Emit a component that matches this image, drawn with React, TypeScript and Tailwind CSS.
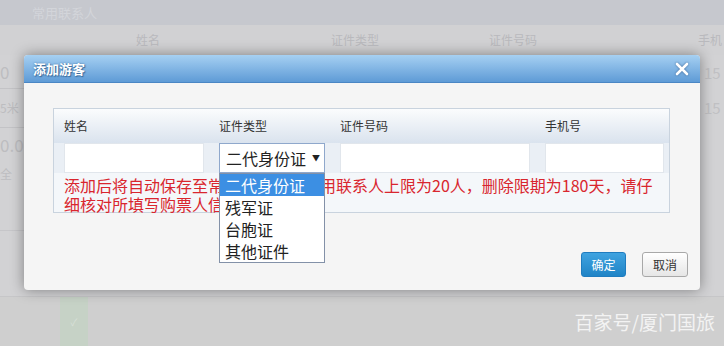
import React from "react";

const font = { fontFamily: '"Noto Sans CJK SC", "Noto Sans", sans-serif' };

export default function App() {
  return (
    <div className="relative w-[724px] h-[346px] overflow-hidden bg-[#d2d2d4]" style={font}>
      {/* background page */}
      <div className="flex flex-col w-full h-full">
        <div className="h-[25px] bg-[#c6c8ce] flex items-center pl-[32px] text-[13px] text-[#d3d5da] leading-none">
          常用联系人
        </div>
        <div className="h-[30px] bg-[#d1d1d3] flex items-center text-[12px] text-[#b9b9bd] leading-none">
          <span className="ml-[136px]">姓名</span>
          <span className="ml-[171px]">证件类型</span>
          <span className="ml-[110px]">证件号码</span>
          <span className="ml-[161px]">手机</span>
        </div>
        <div className="flex-1 flex">
          <div className="w-[24px] flex flex-col text-[#bdbdc0] leading-none">
            <div className="h-[33px] flex items-center text-[17px]">0</div>
            <div className="h-[39px] border-t border-[#c3c3c6] flex items-center text-[12px]">5米</div>
            <div className="h-[33px] border-t border-[#c3c3c6] flex items-center text-[17px]">0.0</div>
            <div className="h-[70px] flex items-start pt-[8px] text-[12px]">全</div>
            <div className="h-[60px] border-t border-[#c6c6c9]"></div>
          </div>
          <div className="flex-1"></div>
          <div className="w-[24px] flex flex-col text-[#c0c0c3] text-[15px] leading-none">
            <div className="h-[35px] flex items-center pl-[4px]">15</div>
            <div className="h-[35px] flex items-center pl-[4px]">15</div>
          </div>
        </div>
        <div className="h-[50px] border-t border-[#c6c6c8] bg-[#cfcfcf] flex items-stretch">
          <div className="w-[60px]"></div>
          <div className="w-[28px] bg-[#c6d2c6] flex items-center justify-center text-[10px] text-[#d8e0d8]">
            ✓
          </div>
          <div className="flex-1 flex items-center justify-end pr-[9px] text-[19px] text-[#f3f3f3] leading-none">
            百家号/厦门国旅
          </div>
        </div>
      </div>

      {/* dialog */}
      <div className="absolute left-[24px] top-[55px] w-[676px] h-[235px] rounded-[4px] bg-[#f5f5f5] shadow-[0_0_14px_rgba(0,0,0,0.4)] flex flex-col overflow-hidden">
        <div className="h-[28px] shrink-0 bg-gradient-to-b from-[#a6d0f2] to-[#5e9bd6] border-b border-[#4a86c4] flex items-center justify-between pl-[9px] pr-[11px]">
          <span className="text-[13px] font-bold text-white leading-none [text-shadow:0_0_2px_#3b6d9e,1px_1px_1px_#3b6d9e]">
            添加游客
          </span>
          <svg width="14" height="14" viewBox="0 0 14 14" className="drop-shadow-[0_0_1px_rgba(40,80,130,0.8)]">
            <path d="M2 2 L12 12 M12 2 L2 12" stroke="#ffffff" strokeWidth="2.6" strokeLinecap="round" />
          </svg>
        </div>

        <div className="flex-1 flex flex-col pt-[25px] pl-[29px] pr-[30px]">
          <div className="h-[105px] border border-[#c9d3de] bg-[#f4f7fa] flex flex-col">
            <div className="h-[34px] shrink-0 bg-gradient-to-b from-[#fbfcfd] to-[#dae3ee] flex items-center pl-[10px] gap-[15px] text-[12px] text-[#333] leading-none">
              <div className="w-[140px] shrink-0">姓名</div>
              <div className="w-[106px] shrink-0">证件类型</div>
              <div className="w-[190px] shrink-0">证件号码</div>
              <div className="w-[119px] shrink-0">手机号</div>
            </div>
            <div className="h-[30px] shrink-0 flex pl-[10px] gap-[15px] bg-[#eaeff5]">
              <div className="w-[140px] shrink-0 bg-white border border-[#e1e6ec]"></div>
              <div className="relative w-[106px] shrink-0">
                <div className="h-[30px] bg-white border border-[#8fa8cc] flex items-center pl-[6px] text-[16px] text-[#222] leading-none">
                  二代身份证
                  <span className="ml-[6px] text-[8px]">▼</span>
                </div>
                <div className="absolute z-10 left-0 top-[30px] w-[106px] bg-white border border-[#8391a8] flex flex-col text-[16px] leading-none text-[#222]">
                  <div className="h-[22px] bg-[#3c8fe3] text-white flex items-center pl-[5px]">二代身份证</div>
                  <div className="h-[22px] flex items-center pl-[5px]">残军证</div>
                  <div className="h-[22px] flex items-center pl-[5px]">台胞证</div>
                  <div className="h-[22px] flex items-center pl-[5px]">其他证件</div>
                </div>
              </div>
              <div className="w-[190px] shrink-0 bg-white border border-[#e1e6ec]"></div>
              <div className="w-[119px] shrink-0 bg-white border border-[#e1e6ec]"></div>
            </div>
            <div className="pt-[3px] pl-[10px] pr-[8px] text-[16px] leading-[19px] text-[#d9262e]">
              添加后将自动保存至常用联系人，常用联系人上限为20人，删除限期为180天，请仔细核对所填写购票人信息。
            </div>
          </div>

          <div className="flex-1"></div>
          <div className="flex justify-end gap-[16px] pb-[13px] -mr-[18px]">
            <button className="w-[45px] h-[25px] rounded-[3px] bg-gradient-to-b from-[#3fa3e0] to-[#1f84c6] border border-[#1f7cbf] text-white text-[12px] leading-none">
              确定
            </button>
            <button className="w-[46px] h-[25px] rounded-[3px] bg-gradient-to-b from-[#ffffff] to-[#e6e6e6] border border-[#a8a8a8] text-[#333] text-[12px] leading-none">
              取消
            </button>
          </div>
        </div>
      </div>
    </div>
  );
}
